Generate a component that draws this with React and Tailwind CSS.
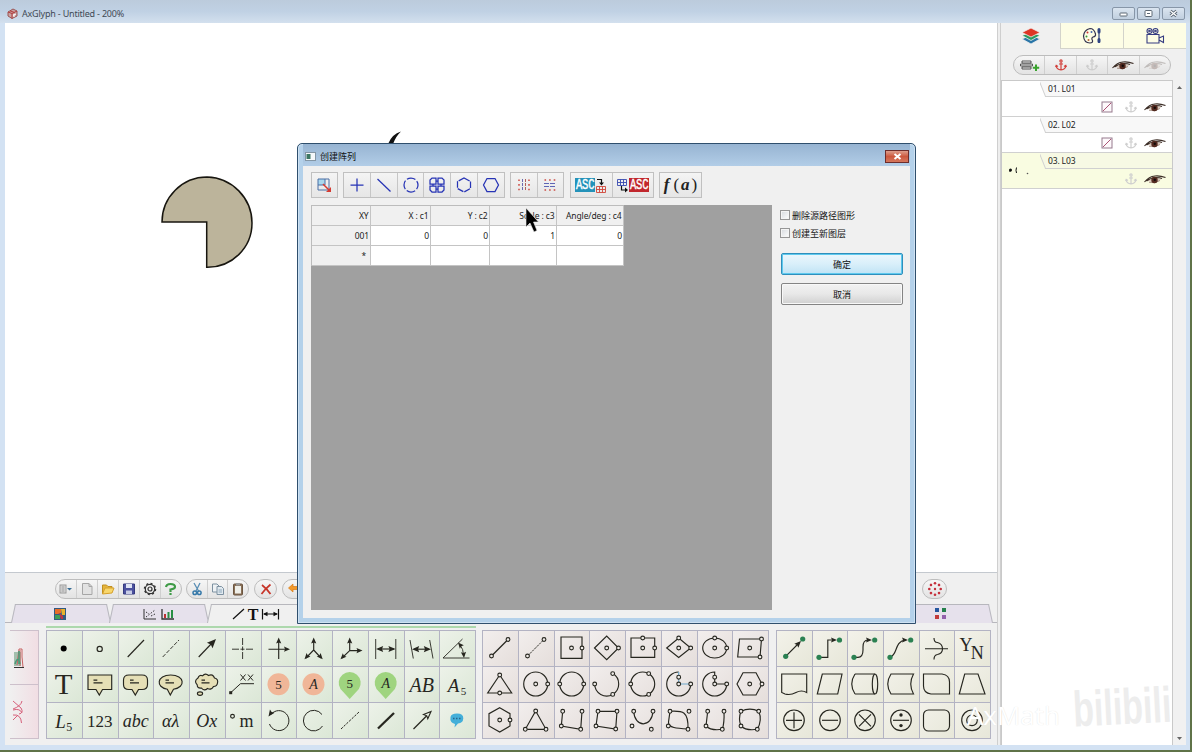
import React from 'react';

const INK = '#26261f';

// small round handle used by the shape icons
function H({ x, y, r = 1.9 }) {
    return <circle cx={x} cy={y} r={r} fill="#efebe8" stroke={INK} strokeWidth="1.1" />;
}

// filled arrow head, pointing right before it is rotated by a
function Head({ x, y, a = 0, s = 1 }) {
    return <path d="M0 0L-6 -2.6L-5 0L-6 2.6Z" fill={INK} stroke="none" transform={`translate(${x} ${y}) rotate(${a}) scale(${s})`} />;
}

function Txt({ x = 17.7, y, size, italic, children }) {
    return (
        <text
            x={x}
            y={y}
            fontSize={size}
            textAnchor="middle"
            fontStyle={italic ? 'italic' : 'normal'}
            fontFamily="'Liberation Serif', serif"
            fill={INK}
            stroke="none"
        >
            {children}
        </text>
    );
}

const PIN = 'M17.7 33L8.5 23A11 11 0 1 1 26.9 23Z';

const drawItems = [
    <circle cx="17.7" cy="18.6" r="3" fill="#000" stroke="none" />,
    <circle cx="17.7" cy="18.9" r="2.6" />,
    <path d="M9.7 27L26 10" />,
    <path d="M9.7 27L26 10" strokeWidth=".9" strokeDasharray="4 1.5" />,
    <g><path d="M9.7 27L24 12" /><Head x={27} y={9} a={-46} s={1.5} /></g>,
    <path d="M7 19.2H28M17.6 8V29" strokeWidth=".9" strokeDasharray="7 1.5 4 1.5" />,
    <g><path d="M7.5 19.2H27M17.7 29V10" /><Head x={29} y={19.2} /><Head x={17.7} y={7.5} a={-90} /></g>,
    <g><path d="M17.7 10V20L10 28M17.7 20L25 28" /><Head x={17.7} y={7.5} a={-90} /><Head x={8.5} y={29.3} a={132} /><Head x={26.7} y={29.3} a={48} /></g>,
    <g><path d="M17.7 10V20.6L10 28M17.7 20.6H28" /><Head x={17.7} y={7.5} a={-90} /><Head x={8.5} y={29.3} a={134} /><Head x={30.5} y={20.6} /></g>,
    <g><path d="M7.7 9V29M27.8 9V29" strokeWidth=".9" /><path d="M10 19H26" /><Head x={27.6} y={19} s={1.2} /><Head x={8} y={19} a={180} s={1.2} /></g>,
    <g><path d="M6 10L9.3 28.5M25.7 10L29 28.5" strokeWidth=".9" /><path d="M10 19.2H25" /><Head x={27} y={19.2} s={1.2} /><Head x={8} y={19.2} a={180} s={1.2} /></g>,
    <g><path d="M23.5 9L4 28H30.5M20.5 14Q24.5 19 24.8 26" strokeWidth=".9" /><Head x={19} y={12.4} a={-130} /><Head x={25} y={28} a={85} /></g>,

    <Txt y={28} size={29}>T</Txt>,
    <g><path d="M6 9H29.7V23.5H20.5L17.3 29L14 23.5H6Z" fill="#e5dfb6" /><path d="M11.5 14.2H15.3M11.5 16.8H20.5" strokeWidth="1.3" /></g>,
    <g><path d="M11 9H24Q29.5 9 29.5 14V18.5Q29.5 23.5 24 23.5H20.5L17.3 29L14 23.5H11Q5.5 23.5 5.5 18.5V14Q5.5 9 11 9Z" fill="#e5dfb6" /><path d="M12 14.2H15.6M12 16.8H21" strokeWidth="1.3" /></g>,
    <g><path d="M14.3 23.2C2.5 21.5 3.5 9 17.7 9S33 21.5 20.5 23.2L17.3 29Z" fill="#e5dfb6" /><path d="M12.5 14.2H16M12.5 16.8H21" strokeWidth="1.3" /></g>,
    <g>
        <path d="M9 12Q10 8.500 13.500 9.800Q16.500 6.500 19.500 9.500Q24 7.500 25.500 12Q29.500 13 28.500 17Q28 20.500 24.500 20.500Q22.500 24.500 18.500 22.500Q15 25.500 12.500 22Q8 22.500 8.200 18.800Q4.500 15 9 12Z" fill="#e5dfb6" />
        <path d="M12.5 14.2H16M12.5 16.8H20.5" strokeWidth="1.3" />
        <ellipse cx="11" cy="27.6" rx="2.6" ry="1.8" fill="#e5dfb6" />
    </g>,
    <g><path d="M5.7 26.700L15.500 17.700H29M15.500 8.500L20.500 14.500M20.500 8.500L15.500 14.500M23 8.500L28 14.500M28 8.500L23 14.500" strokeWidth="1" /><rect x="4.2" y="25.2" width="3" height="3" fill={INK} stroke="none" /></g>,
    <g><circle cx="17.5" cy="18.3" r="11" fill="#f0b698" stroke="none" /><Txt x={17.5} y={22.8} size={13}>5</Txt></g>,
    <g><circle cx="17.5" cy="18.3" r="11" fill="#f0b698" stroke="none" /><Txt x={17.5} y={22.8} size={14} italic>A</Txt></g>,
    <g><path d={PIN} fill="#9fd47f" stroke="none" /><Txt y={22.4} size={13}>5</Txt></g>,
    <g><path d={PIN} fill="#9fd47f" stroke="none" /><Txt y={22.4} size={14} italic>A</Txt></g>,
    <Txt y={25.5} size={20} italic>AB</Txt>,
    <g><Txt x={14.5} y={26} size={19} italic>A</Txt><Txt x={24.5} y={28.5} size={11}>5</Txt></g>,

    <g><Txt x={14.5} y={26} size={19} italic>L</Txt><Txt x={23.3} y={28.8} size={12}>5</Txt></g>,
    <Txt y={25} size={17}>123</Txt>,
    <Txt y={25} size={18} italic>abc</Txt>,
    <Txt y={25} size={18} italic>αλ</Txt>,
    <Txt y={25} size={18} italic>Ox</Txt>,
    <g><circle cx="7.5" cy="14.2" r="1.9" /><Txt x={21.5} y={25} size={18}>m</Txt></g>,
    <g><path d="M10 12.500A10 10 0 1 1 8.500 22" strokeWidth="1" /><Head x={7.5} y={14.5} a={125} s={1.1} /></g>,
    <path d="M26 12.500A10.300 10.300 0 1 0 26.500 24" strokeWidth="1" />,
    <path d="M9 27L27 10" strokeWidth="1" strokeDasharray="2.5 1.2" />,
    <path d="M10 26.500L26 11" strokeWidth="2.3" />,
    <g><path d="M9.5 27L23 13.500" /><path d="M27 9.500L23.800 16.800L22.800 13.800L19.500 12.500Z" fill="#e5eee0" strokeWidth="1.1" /></g>,
    <g>
        <path d="M11.500 15Q12 11.500 18 11.500Q24.500 11.500 24.300 16.500Q24 21 19 21.500L15.500 25.500L16 22Q10.500 20.500 11.500 15Z" fill="#43afd9" stroke="none" />
        <path d="M14 16.500H22" stroke="#27648a" strokeWidth="1.4" strokeDasharray="1.5 1.5" />
    </g>,
];

const shapeItems = [
    <g><path d="M9.5 26L26 9.500" /><H x={9.5} y={26} /><H x={26} y={9.5} /></g>,
    <g><path d="M9.5 26L26 9.500" strokeWidth=".9" strokeDasharray="2.5 .8" /><H x={9.5} y={26} /><H x={26} y={9.5} /></g>,
    <g><path d="M7 7H28V28.300H7Z" /><H x={17.5} y={18} /><H x={28} y={18} /></g>,
    <g><path d="M5.500 18L17.700 6L29.500 18L17.700 29.700Z" /><H x={17.7} y={18} /><H x={29.5} y={18} /></g>,
    <g><path d="M6 8H29.700V27.300H6Z" /><H x={17.7} y={8} /><H x={17.7} y={18} /><H x={29.7} y={18} /></g>,
    <g><path d="M5.700 18L17.700 8L29.700 18L17.700 27.500Z" /><H x={17.7} y={8} /><H x={17.7} y={18} /><H x={29.7} y={18} /></g>,
    <g><ellipse cx="17.7" cy="18" rx="12" ry="10" /><H x={17.7} y={8} /><H x={17.7} y={18} /><H x={29.7} y={18} /></g>,
    <g><path d="M7.500 9H29.500L28 27H5.700Z" /><H x={29.5} y={9} /><H x={28} y={27} /><H x={17.7} y={18} /></g>,

    <g><path d="M17.700 9L29.700 27H5.700Z" /><H x={17.7} y={9} /><H x={17.7} y={27} /></g>,
    <g><circle cx="17.7" cy="18" r="12" /><H x={17.7} y={18} /><H x={29.7} y={18} /></g>,
    <g><circle cx="17.7" cy="18" r="12" /><H x={5.7} y={18} /><H x={29.7} y={18} /></g>,
    <g><path d="M5.700 18A12 12 0 1 0 23.700 7.600" /><H x={5.7} y={18} /><H x={23.7} y={7.6} /><H x={23.7} y={28.4} /></g>,
    <g><circle cx="17.7" cy="18" r="12" /><H x={5.7} y={18} /><H x={23.7} y={7.6} /><H x={23.7} y={28.4} /></g>,
    <g><path d="M17.700 6A12 12 0 1 0 29.700 18" /><path d="M17.700 6V18H29.700" stroke="#6fa8cc" /><H x={17.7} y={11.2} /><H x={17.7} y={18} /><H x={29.7} y={18} /></g>,
    <g><path d="M17.700 18V6A12 12 0 1 0 29.700 18Z" /><H x={17.7} y={11.2} /><H x={17.7} y={18} /><H x={29.7} y={18} /></g>,
    <g><path d="M5 18L11 6.700H24L30 18L24 29H11Z" /><H x={17.7} y={18} /><H x={30} y={18} /></g>,

    <g><path d="M17.700 5.700L28 11.700V24L17.700 30L7 24V11.700Z" /><H x={17.7} y={18} /><H x={28} y={18} /></g>,
    <g><path d="M17.700 9L28 27.300H7.300Z" /><H x={17.7} y={9} /><H x={28} y={27.3} /><H x={7.3} y={27.3} /></g>,
    <g><path d="M8.700 9.300L7.300 24L26.700 27.300L28 9.300" /><H x={8.7} y={9.3} /><H x={7.3} y={24} /><H x={26.7} y={27.3} /><H x={28} y={9.3} /></g>,
    <g><path d="M9 9.300H28L26.700 27L7 24Z" /><H x={9} y={9.3} /><H x={28} y={9.3} /><H x={26.7} y={27} /><H x={7} y={24} /></g>,
    <g><path d="M8.700 9.300C9.500 26 27 26 28 9.300" /><H x={8.7} y={9.3} /><H x={28} y={9.3} /><H x={7} y={24} /><H x={26.3} y={27.3} /></g>,
    <g><path d="M9 9.300C22 8.500 27.500 9.500 27 27C16 26.500 7 26 7.500 20Z" /><H x={9} y={9.3} /><H x={28} y={9.3} /><H x={27} y={27.3} /><H x={7.3} y={24} /></g>,
    <g><path d="M10.700 9.300L9 24Q14 29 25.300 27.300Q27.500 21 27 9.300" /><H x={10.7} y={9.3} /><H x={9} y={24} /><H x={25.3} y={27.3} /><H x={27} y={9.3} /></g>,
    <g><path d="M9 9.300Q18 5 26.700 9.300Q30.500 18 25.300 27.300Q14 29 9 24Q6 17 9 9.300Z" /><H x={9} y={9.3} /><H x={26.7} y={9.3} /><H x={25.3} y={27.3} /><H x={9} y={24} /></g>,
];

function G({ x, y }) {
    return <circle cx={x} cy={y} r="2.6" fill="#2b8152" stroke="none" />;
}

const flowItems = [
    <g><path d="M9.700 26.300L23 13" /><G x={9.7} y={26.3} /><Head x={25} y={11} a={-45} s={1.1} /><G x={26.7} y={9} /></g>,
    <g><path d="M7 27.300H15.800V10H22" /><G x={7} y={27.3} /><Head x={25} y={10} /><G x={27.5} y={10} /></g>,
    <g><path d="M7 27.300H11Q16 27.300 16 20V17Q16 10 21 10" /><G x={7} y={27.3} /><Head x={25} y={10} /><G x={27.7} y={10} /></g>,
    <g><path d="M7 27.300C15 25 11 12 22 10" /><G x={7} y={27.3} /><Head x={25} y={10} /><G x={27.7} y={10} /></g>,
    <path d="M6 18.700H29M15 8Q15 12.500 18.500 12.500Q23.500 14 23.500 18.700Q23.500 23.500 18.500 24.500Q15 25 15 29.500" />,
    <g><Txt x={12} y={21} size={18}>Y</Txt><Txt x={23.3} y={28.8} size={18}>N</Txt></g>,

    <path d="M5.700 8H30.700V26.500Q25.500 23.500 20 26.500T9 28L5.700 26.500Z" />,
    <path d="M10.300 8H30L25.700 28H5.300Z" />,
    <g><path d="M8 8H28M8 28H28M8 8Q1.500 18 8 28" /><ellipse cx="28" cy="18" rx="2.7" ry="10" /></g>,
    <path d="M8 8H30.500Q25 18 30.500 28H8Q1.500 18 8 8Z" />,
    <path d="M4.500 8H23Q30.500 9 30.500 16V28H12Q4.500 27 4.500 20Z" />,
    <path d="M10.700 8H24L31 28H5.300Z" />,

    <g><circle cx="18" cy="18.3" r="10.3" /><path d="M10 18.300H26M18 10.300V26.300" /></g>,
    <g><circle cx="18" cy="18.3" r="10.3" /><path d="M10 18.300H26" /></g>,
    <g><circle cx="18" cy="18.3" r="10.3" /><path d="M12 12.300L24 24.300M24 12.300L12 24.300" /></g>,
    <g><circle cx="18" cy="18.3" r="10.3" /><path d="M10 18.300H26" /><circle cx="18" cy="13" r="1.7" fill={INK} stroke="none" /><circle cx="18" cy="23.6" r="1.7" fill={INK} stroke="none" /></g>,
    <rect x="4.5" y="8" width="26" height="21" rx="5" />,
    <g><circle cx="18" cy="18.3" r="10.3" /><circle cx="18" cy="18.3" r="5.3" /></g>,
];

function Palette({ items, className, cell }) {
    return (
        <div className={`grid h-[109px] shrink-0 grid-rows-3 border-l border-t border-[#b3b3c3] ${className}`}>
            {items.map((item, i) => (
                <div key={i} className={`overflow-hidden border-b border-r border-[#b3b3c3] bg-gradient-to-br ${cell}`}>
                    <svg width="36" height="36" viewBox="0 0 36 36" fill="none" stroke={INK} strokeWidth="1.15" className="-mt-px -ml-px block">
                        {item}
                    </svg>
                </div>
            ))}
        </div>
    );
}

function Pill({ children, className }) {
    return (
        <div className={`flex h-[20px] shrink-0 divide-x divide-[#cfcfcf] overflow-hidden rounded-full border border-[#bdbdbd] bg-gradient-to-b from-[#f6f6f6] to-[#e3e3e3] ${className}`}>
            {React.Children.map(children, (child) => (
                <div className="flex flex-1 items-center justify-center">{child}</div>
            ))}
        </div>
    );
}

function Icon({ size = 14, w, children, className = '' }) {
    return (
        <svg width={w || size} height={size} viewBox={`0 0 ${w || size} ${size}`} fill="none" stroke="#333" strokeWidth="1" className={`shrink-0 ${className}`}>
            {children}
        </svg>
    );
}

function Eye({ off }) {
    return (
        <Icon w={22} size={12} className={off ? 'opacity-25' : ''}>
            <path d="M3 7.500Q7 5 12 5Q15 5 17 6Q15 9.500 9.500 9.500Q6 9 3 7.500Z" stroke="none" fill="#d9c9bd" />
            <path d="M.5 9Q5 3.500 11 3Q16 2.500 21.500 4.500M2.500 8Q6 5 12 4.500Q16 4.500 18 5.500" stroke="#3a2c25" strokeWidth="1.1" />
            <path d="M5 9.300Q11 11 16 7.500" stroke="#9b8479" strokeWidth=".8" />
            <circle cx="10.5" cy="7" r="3.2" fill="#52291f" stroke="none" />
            <circle cx="10.8" cy="6.7" r="1.2" fill="#120a08" stroke="none" />
        </Icon>
    );
}

function Anchor({ color }) {
    return (
        <Icon w={12} size={12}>
            <g stroke={color} strokeWidth="1.2">
                <circle cx="6" cy="2" r="1.1" />
                <path d="M6 3.500V11M4 5H8M1 6.500Q1.500 10.500 6 11Q10.500 10.500 11 6.500M.5 8L1.200 6.300L3 7.500M9 7.500L10.800 6.300L11.500 8" />
            </g>
        </Icon>
    );
}

function TitleBar() {
    return (
        <header className="flex h-[23px] shrink-0 items-center bg-gradient-to-b from-[#bccbdc] via-[#c0d1e4] to-[#d3e0ee] pl-[7px] pt-[3px]">
            <Icon size={11}>
                <path d="M1 4L6 1L10 3V8L5 10.500L1 8Z" fill="#c9a5a5" stroke="#9a5555" />
                <path d="M1 4L5 5.500V10.500M5 5.500L10 3M3 2.800L7.500 4.500" stroke="#b33b3b" />
                <path d="M7 6V9M6 7.500L9 6" stroke="#fff" />
            </Icon>
            <span className="ml-[4px] text-[9px] leading-none tracking-[-0.2px] text-[#3f4a55]">AxGlyph - Untitled - 200%</span>
            <div className="mr-[5px] ml-auto flex gap-[2px]">
                {[
                    <rect x="4" y="5" width="7" height="3" rx=".5" fill="#fff" />,
                    <g><rect x="4" y="2.5" width="7" height="6" rx="1" fill="#fff" /><path d="M6 5.500H9" /></g>,
                    <g><path d="M4.500 3L10.500 8M10.500 3L4.500 8" strokeWidth="3" /><path d="M4.500 3L10.500 8M10.500 3L4.500 8" strokeWidth="1.2" stroke="#fff" /></g>,
                ].map((glyph, i) => (
                    <div key={i} className="flex h-[13px] w-[23px] items-center justify-center rounded-[2px] border border-[#8796a8] bg-gradient-to-b from-[#dbe5f0] to-[#c0cfdf]">
                        <Icon w={15} size={11}><g stroke="#5c6875">{glyph}</g></Icon>
                    </div>
                ))}
            </div>
        </header>
    );
}

function FileToolbar() {
    return (
        <div className="flex h-[32px] shrink-0 items-center border-t border-[#c4c9cf] pl-[50px]">
            <Pill className="w-[127px]">
                <Icon><rect x="1" y="3" width="6" height="8" fill="#ddd" stroke="#999" /><path d="M2.500 5H5.500M2.500 7H5.500M2.500 9H5.500" stroke="#999" /><path d="M8 6H13L10.500 8.500Z" fill="#376c93" stroke="none" /></Icon>
                <Icon><path d="M2.500 1.500H9L12 4.500V12.500H2.500Z" fill="#e2e2e2" stroke="#a6a6a6" /><path d="M9 1.500V4.500H12" stroke="#a6a6a6" /></Icon>
                <Icon><path d="M1.500 12V3H5.500L7 4.500H11V6" fill="#e5b53c" stroke="#c08f21" /><path d="M1.500 12L4 6H13L11 11Z" fill="#f8d76c" stroke="#d5a02c" /></Icon>
                <Icon><path d="M1.500 2H12.500V12H1.500Z" fill="#4c519f" stroke="#353a80" /><path d="M4 2H10V6H4Z" fill="#dfe4f4" stroke="none" /><path d="M4 8.500H10V12H4Z" fill="#c7cce6" stroke="none" /></Icon>
                <Icon><circle cx="7" cy="7" r="4.7" strokeWidth="1.2" /><circle cx="7" cy="7" r="5.5" strokeWidth="1.5" strokeDasharray="2 2.3" /><circle cx="7" cy="7" r="2" strokeWidth="1.2" /></Icon>
                <Icon><path d="M2 5Q2.500 2 6.500 2Q11 2 11 4.800Q11 7 6.500 7.500V10M6.500 11V13" stroke="#3f9b47" strokeWidth="2.2" /></Icon>
            </Pill>
            <Pill className="ml-[4px] w-[63px]">
                <Icon><path d="M4 1L8.500 9M10 1L6 9" stroke="#5b8fb5" strokeWidth="1.3" /><circle cx="4.8" cy="10.8" r="1.8" stroke="#3679a9" strokeWidth="1.5" /><circle cx="9.3" cy="10.8" r="1.8" stroke="#3679a9" strokeWidth="1.5" /></Icon>
                <Icon><path d="M1.500 2H6L8 4V10H1.500Z" fill="#eef2f5" stroke="#7d91a1" /><path d="M6 4.500H10.500L12.500 6.500V12.500H6Z" fill="#e1e9ef" stroke="#7d91a1" /><path d="M7.500 8H11M7.500 10H11" stroke="#8ba7bb" /></Icon>
                <Icon><rect x="2.5" y="2" width="9" height="11" rx="1" fill="#8a7158" stroke="#6b5540" /><rect x="4" y="4" width="6" height="7.5" fill="#efefe9" stroke="none" /><rect x="5" y="1" width="4" height="2.5" fill="#999" stroke="none" /></Icon>
            </Pill>
            <Pill className="ml-[5px] w-[23px]">
                <Icon><path d="M3 3Q8 7 11.500 12M11.500 2.500Q6 7 2.500 12" stroke="#c73529" strokeWidth="1.7" /></Icon>
            </Pill>
            <Pill className="ml-[5px] w-[46px]">
                <Icon><path d="M6 2L1.500 6L6 10V7.500H13V4.500H6Z" fill="#f39a2b" stroke="#d97b15" strokeWidth=".7" /></Icon>
                <Icon><path d="M8 2L12.500 6L8 10V7.500H1V4.500H8Z" fill="#f39a2b" stroke="none" /></Icon>
            </Pill>
            <Pill className="mr-[50px] ml-auto w-[25px]">
                <Icon size={16}>
                    <g fill="#c5303c" stroke="none">
                        {[0, 45, 90, 135, 180, 225, 270, 315].map((a) => (
                            <circle key={a} cx="8" cy="2.3" r="1.3" transform={`rotate(${a} 8 8)`} />
                        ))}
                        <circle cx="8" cy="8" r="1.2" />
                    </g>
                </Icon>
            </Pill>
        </div>
    );
}

function Tab({ active, children }) {
    const fill = active ? 'bg-[#f0f0f0]' : 'bg-[#e6e1ec]';

    return (
        <div className="relative flex h-[19px] w-[98px] items-center justify-center">
            <div className={`absolute inset-y-0 right-[40px] left-[2px] -skew-x-12 border-t border-l border-[#b7b7bd] ${fill}`} />
            <div className={`absolute inset-y-0 right-0 left-[40px] skew-x-12 border-t border-r border-[#b7b7bd] ${fill}`} />
            <div className="relative flex items-center gap-[4px]">{children}</div>
        </div>
    );
}

function CategoryTabs() {
    return (
        <div className="flex h-[19px] shrink-0 border-b border-[#b7b7bd] pl-[6px]">
            <Tab>
                <Icon size={12}>
                    <rect width="12" height="12" fill="#315a80" stroke="none" />
                    <path d="M1 1H7V5L4 6H1Z" fill="#e76c28" stroke="none" /><path d="M7 1H11V7H8Z" fill="#e8b22c" stroke="none" /><path d="M1 7H6V11H1Z" fill="#3e9d56" stroke="none" /><path d="M5 5L9 8V11H7Z" fill="#bd3542" stroke="none" />
                </Icon>
            </Tab>
            <Tab>
                <Icon w={14} size={12}><path d="M1 1V11H13" /><path d="M3 9L12 2M3 4L6 6M8 8L12 6" strokeDasharray="1.5 1.5" /></Icon>
                <Icon w={13} size={12}><path d="M1 1V11H13" strokeWidth="1.3" /><path d="M4 6V10" stroke="#b33" strokeWidth="2" /><path d="M7.500 4V10" stroke="#278f43" strokeWidth="2" /><path d="M11 2V10" stroke="#278f43" strokeWidth="2" /></Icon>
            </Tab>
            <Tab active>
                <Icon w={48} size={14}>
                    <path d="M1 12L12 2M30.500 2V12.500M46.500 2V12.500M32 7H45" stroke="#111" strokeWidth="1.2" />
                    <path d="M31 7L35.500 4.800V9.200ZM46 7L41.500 4.800V9.200Z" fill="#111" stroke="none" />
                    <text x="21" y="12.5" fontSize="16" fontWeight="bold" textAnchor="middle" fontFamily="'Liberation Serif', serif" fill="#111" stroke="none">T</text>
                </Icon>
            </Tab>
            {[1, 2, 3, 4, 5, 6].map((n) => (
                <Tab key={n} />
            ))}
            <Tab>
                <div className="pr-[4px]">
                    <Icon size={13}>
                        <g stroke="none"><rect x="1" y="1" width="4" height="4" fill="#24569e" /><rect x="8" y="1" width="4" height="4" fill="#24804b" /><rect x="1" y="8" width="4" height="4" fill="#c23b3b" /><rect x="8" y="8" width="4" height="4" fill="#9361ab" /></g>
                    </Icon>
                </div>
            </Tab>
        </div>
    );
}

function Palettes() {
    return (
        <div className="flex flex-1 pt-[2px] pl-[5px]">
            <div className="mt-[5px] flex h-[109px] w-[29px] shrink-0 flex-col bg-gradient-to-r from-[#f0f0f0] to-[#f1dde3]">
                <div className="flex flex-1 items-center border-y border-r border-[#cdc0cb] pl-[3px]">
                    <Icon w={12} size={22}><path d="M1 5H8V19H1Z" fill="#a3bfad" stroke="none" /><path d="M4 18L6 2H9V10L10 20M7 3V19" stroke="#c66060" /><path d="M1 20.500H11" stroke="#333" /><path d="M2 17Q5 8 7 17M6 4V17" stroke="#4b9a78" strokeWidth="1.6" /></Icon>
                </div>
                <div className="flex flex-1 items-center border-r border-b border-[#cdc0cb] pl-[3px]">
                    <Icon w={11} size={24}><path d="M0 1L8 8Q11 13 6 14M9 1Q8 6 0 9M0 10Q7 8 9 13M0 15Q8 14 8.500 23M0 20L5 15" stroke="#d6607a" /></Icon>
                </div>
            </div>
            <div className="mt-px ml-[7px]">
                <div className="mb-[2px] h-[2px] bg-[#add8ad]" />
                <Palette items={drawItems} className="w-[430px] grid-cols-12" cell="from-[#edf2e9] to-[#dbe7d6]" />
            </div>
            <Palette items={shapeItems} className="mt-[5px] ml-[6px] w-[287px] grid-cols-8" cell="from-[#f2eeed] to-[#e5dedb]" />
            <Palette items={flowItems} className="mt-[5px] ml-[7px] w-[215px] grid-cols-6" cell="from-[#f3f2ea] to-[#e7e7d9]" />
        </div>
    );
}

function Layer({ name, selected, hatched, preview }) {
    return (
        <div className={`flex h-[36px] border-b border-[#d0d0d0] ${selected ? 'bg-[#f9fce1]' : 'bg-white'}`}>
            <div className="w-[38px] pt-[14px] pl-[5px]">
                {preview && (
                    <Icon w={24} size={10}>
                        <circle cx="3.5" cy="3" r="1.5" fill="#111" stroke="none" />
                        <path d="M3 3V5M9.500 .5Q8.500 3.500 9.500 6" stroke="#111" />
                        <circle cx="20.5" cy="6.5" r=".8" fill="#555" stroke="none" />
                    </Icon>
                )}
            </div>
            <div className="flex flex-1 flex-col overflow-hidden">
                <div className="relative h-[16px] shrink-0 pl-[8px] text-[8.5px] leading-[15px] tracking-[-0.15px] text-[#222]">
                    <div className={`absolute inset-y-0 -right-3 left-[2px] skew-x-[22deg] border-b border-l border-[#d0d0d0] ${selected ? 'bg-[#f7f9e4]' : 'bg-[#f8f8f8]'}`} />
                    <span className="relative">{name}</span>
                </div>
                <div className="flex flex-1 items-center justify-end pr-[6px]">
                    {hatched && (
                        <Icon size={12}><rect x="1" y="1" width="10" height="10" fill="#fdf8fb" stroke="#967a8d" /><path d="M2 10L10 2" stroke="#aa5374" /></Icon>
                    )}
                    <div className="mr-[7px] ml-[12px] flex"><Anchor color="#cfcfcf" /></div>
                    <Eye />
                </div>
            </div>
        </div>
    );
}

function SidePanel() {
    return (
        <aside className="flex w-[185px] shrink-0 flex-col bg-[#f0f0f0]">
            <div className="flex h-[26px] shrink-0">
                <div className="flex w-[59px] items-center justify-center">
                    <Icon w={20} size={18}>
                        <path d="M1 12L10 17L19 12L10 8Z" fill="#2b76a8" stroke="#f0f0f0" strokeWidth=".8" />
                        <path d="M1 8.500L10 13.500L19 8.500L10 5Z" fill="#2c9b60" stroke="#f0f0f0" strokeWidth=".8" />
                        <path d="M1 5.500L10 1L19 5.500L10 10Z" fill="#dd3625" stroke="#f0f0f0" strokeWidth=".8" />
                    </Icon>
                </div>
                <div className="flex w-[63px] items-center justify-center border-b border-l border-[#d3d3cb] bg-[#fdfde5]">
                    <Icon w={20} size={18}>
                        <path d="M8 1.500Q2 3 1.500 9Q2 16 8 16Q11 16 10.500 13.500Q9 11 11 10Q14 9.500 13.500 7Q12 1.500 8 1.500Z" stroke="#33334f" strokeWidth="1.2" />
                        <circle cx="5.5" cy="5.5" r="1" fill="#c33" stroke="none" /><circle cx="9.5" cy="5" r="1" fill="#46a" stroke="none" /><circle cx="4.5" cy="9.5" r="1" fill="#393" stroke="none" /><circle cx="6.5" cy="13" r="1" fill="#b63" stroke="none" />
                        <path d="M17 2V16" stroke="#2e4381" strokeWidth="1.2" /><path d="M17 2.500V5M17 12.500V14.500" stroke="#2e4381" strokeWidth="3" strokeLinecap="round" />
                    </Icon>
                </div>
                <div className="flex flex-1 items-center justify-center border-b border-l border-[#d3d3cb] bg-[#fdfde5]">
                    <Icon w={20} size={18}>
                        <g stroke="#363c82" strokeWidth="1.1"><circle cx="4.5" cy="4" r="2.5" /><circle cx="10.5" cy="4" r="2.5" /><circle cx="4.5" cy="4" r=".8" /><circle cx="10.5" cy="4" r=".8" /><path d="M2 7.500H14V16H2ZM14 11L18.500 9V15.500L14 13" /></g>
                    </Icon>
                </div>
            </div>
            <Pill className="mt-[6px] ml-[12px] w-[158px]">
                <Icon w={22} size={14}><path d="M4 3H13V5H4ZM4 9H13V11H4ZM2.500 6H14.500V8H2.500Z" stroke="#444" strokeWidth=".9" /><path d="M18 6.500V13M14.800 9.800H21.200" stroke="#3aa32e" strokeWidth="2" /></Icon>
                <Anchor color="#d2413c" />
                <Anchor color="#cdcdcd" />
                <Eye />
                <Eye off />
            </Pill>
            <div className="mt-[5px] flex flex-1">
                <div className="w-[172px] border-t border-r border-l border-[#c9c9c9] bg-white">
                    <Layer name="01. L01" hatched />
                    <Layer name="02. L02" hatched />
                    <Layer name="03. L03" selected preview />
                </div>
                <div className="flex flex-1 flex-col items-center justify-between bg-[#f1f1f1] pt-[5px] pb-[4px]">
                    <Icon size={5}><path d="M0 4L2.500 1L5 4Z" fill="#666" stroke="none" /></Icon>
                    <Icon size={5}><path d="M0 1L2.500 4L5 1Z" fill="#666" stroke="none" /></Icon>
                </div>
            </div>
        </aside>
    );
}

function ToolGroup({ items, className = '' }) {
    return (
        <div className={`flex h-[26px] shrink-0 divide-x divide-[#c6c6c6] border border-[#c0c0c0] bg-gradient-to-b from-[#f4f4f4] to-[#e6e6e6] ${className}`}>
            {items.map((item, i) => (
                <div key={i} className="flex w-0 flex-1 items-center justify-center">{item}</div>
            ))}
        </div>
    );
}

function Asc({ color, children }) {
    return (
        <span className={`flex h-[14px] w-[20px] shrink-0 items-center justify-center text-[14px] leading-none text-white ${color}`}>
            <span className="scale-x-[0.75] font-['Liberation_Mono',monospace] tracking-[-0.3px] [-webkit-text-stroke:0.4px_white]">{children}</span>
        </span>
    );
}

const BLUE = '#2633b5';

function MiniGrid({ color }) {
    return <path d="M.5 .5H9.500V6.500H.5ZM.5 3.500H9.500M3.500 .5V6.500M6.500 .5V6.500" stroke={color} strokeWidth=".9" />;
}

function DialogTools() {
    const shapes = [
        <path d="M9 2.500V15.500M2.500 9H15.500" />,
        <path d="M2.500 3L15.500 15.500" />,
        <circle cx="9" cy="9" r="7" strokeDasharray="9 2" strokeDashoffset="4.5" />,
        <path d="M4 2H8V8H2V4ZM10 2H14L16 4V8H10ZM2 10H8V16H4L2 14ZM10 10H16V14L14 16H10ZM8 5H10M8 13H10M5 8V10M13 8V10" />,
        <path d="M9 2L15.500 5.500V12.500L9 16L2.500 12.500V5.500Z" strokeDasharray="6.4 1.1" />,
        <path d="M1.500 9L5 2.500H13L16.500 9L13 15.500H5Z" />,
    ];

    return (
        <div className="flex h-[26px]">
            <ToolGroup
                className="w-[27px]"
                items={[
                    <Icon key="resize" size={15}>
                        <rect x="1" y="1" width="7" height="6" fill="#a9d8ee" stroke="none" />
                        <path d="M1 1H12V12H1ZM1 7H8V1" stroke="#4b6fa5" />
                        <path d="M6 6L12 12" stroke="#d53a31" strokeWidth="1.5" /><path d="M14 14V9L9 14Z" fill="#d53a31" stroke="none" />
                    </Icon>,
                ]}
            />
            <ToolGroup
                className="ml-[5px] w-[162px]"
                items={shapes.map((shape, i) => (
                    <Icon key={i} size={18}><g stroke={BLUE} strokeWidth="1.25">{shape}</g></Icon>
                ))}
            />
            <ToolGroup
                className="ml-[5px] w-[54px]"
                items={[
                    <Icon key="cols" size={14}><path d="M2 1.500V14M12 1.500V14" stroke="#cc4a42" strokeWidth="1.5" strokeDasharray="1.6 3" /><path d="M5.500 1V13" stroke="#6b6bb1" strokeDasharray="3 1" /><path d="M8.500 1V13" stroke="#b0635f" strokeDasharray="3 1" /></Icon>,
                    <Icon key="rows" size={14}><path d="M1.500 2H14M1.500 12H14" stroke="#cc4a42" strokeWidth="1.5" strokeDasharray="1.6 3" /><path d="M1 5.500H13M1 8.500H13" stroke="#5f66b5" strokeDasharray="5 1" /></Icon>,
                ]}
            />
            <ToolGroup
                className="ml-[6px] w-[84px]"
                items={[
                    <div key="in" className="flex items-center">
                        <Asc color="bg-[#2492b9]">ASC</Asc>
                        <Icon w={12} size={15}><path d="M2 1.500H6.500V6" stroke="#111" strokeWidth="1.2" /><path d="M4 4.500H9L6.500 7.500Z" fill="#111" stroke="none" /><g transform="translate(1 8)"><MiniGrid color="#d04538" /></g></Icon>
                    </div>,
                    <div key="out" className="flex items-center">
                        <Icon w={12} size={15}><g transform="translate(0 1)"><MiniGrid color="#3849b0" /></g><path d="M4.500 8V12H8" stroke="#111" strokeWidth="1.2" /><path d="M8 9.500V14.500L11 12Z" fill="#111" stroke="none" /></Icon>
                        <Asc color="bg-[#c1272d]">ASC</Asc>
                    </div>,
                ]}
            />
            <ToolGroup
                className="ml-[5px] w-[43px]"
                items={[
                    <span key="fn" className="flex items-center gap-[2px] pb-px font-['Liberation_Serif',serif] text-[17px] leading-none text-[#222]">
                        <b className="mr-[2px] italic">f</b>(<b className="italic">a</b>)
                    </span>,
                ]}
            />
        </div>
    );
}

const columns = ['XY', 'X : c1', 'Y : c2', 'Scale : c3', 'Angle/deg : c4'];
const rows = [
    ['001', '0', '0', '1', '0'],
    ['*', '', '', '', ''],
];

function ArrayTable() {
    return (
        <div className="h-[405px] w-[461px] bg-[#a0a0a0]">
            <div className="grid w-[313px] grid-cols-[59px_60px_59px_67px_67px] grid-rows-[20px_20px_20px] border-t border-l border-[#bcbcbc] text-right text-[8.5px] leading-[20px] tracking-[-0.1px] text-[#222]">
                {columns.map((label) => (
                    <div key={label} className="border-r border-b border-[#c4c4c4] bg-[#f0f0f0] pr-[1.5px] whitespace-nowrap">{label}</div>
                ))}
                {rows.map((row) => row.map((value, i) => (
                    <div key={row[0] + i} className={`border-r border-b border-[#c4c4c4] pr-[1px] ${i === 0 ? 'bg-[#f0f0f0]' : 'bg-white'}`}>
                        {value === '*' ? <span className="mr-[3px]">*</span> : value}
                    </div>
                )))}
            </div>
        </div>
    );
}

function CheckLine({ label }) {
    return (
        <label className="flex h-[18px] items-center gap-[2px] text-[9px] leading-none whitespace-nowrap text-[#111]">
            <span className="h-[10px] w-[10px] border border-[#969696] bg-gradient-to-br from-[#d5d9dd] to-white shadow-[inset_0_0_0_1px_#f4f4f4]" />
            {label}
        </label>
    );
}

function ArrayDialog() {
    return (
        <div className="absolute top-[143px] left-[297px] flex h-[481px] w-[619px] flex-col rounded-t-[5px] border border-[#2f4f6d] bg-[#b4d1ea] px-[5px] pb-[5px] shadow-[inset_0_0_0_1px_#cfe2f3]">
            <div className="flex h-[22px] shrink-0 items-center bg-gradient-to-b from-[#97b4d2] to-[#b2cde7] pt-[3px] pl-[2px]">
                <Icon w={11} size={9}><rect x=".5" y=".5" width="10" height="8" fill="#f5f8fa" stroke="#8496a5" /><rect x="1.5" y="2" width="4" height="5" fill="#3d7763" stroke="none" /></Icon>
                <span className="ml-[4px] text-[9px] leading-none text-[#111]">创建阵列</span>
                <div className="mr-px ml-auto flex h-[13px] w-[24px] items-center justify-center border border-[#6d2d2b] bg-gradient-to-b from-[#dd9d8b] via-[#cc583e] to-[#d5765c]">
                    <Icon w={9} size={7}><path d="M1.500 1L7.500 6M7.500 1L1.500 6" stroke="#fff" strokeWidth="2" /></Icon>
                </div>
            </div>
            <div className="flex-1 bg-[#f0f0f0] pt-[6px] pl-[8px]">
                <DialogTools />
                <div className="mt-[7px] flex">
                    <ArrayTable />
                    <div className="mt-px ml-[8px] w-[123px]">
                        <CheckLine label="删除源路径图形" />
                        <CheckLine label="创建至新图层" />
                        <button type="button" className="mt-[11px] ml-px block h-[22px] w-[122px] rounded-[2px] border border-[#2f8fbc] bg-gradient-to-b from-[#ebf6fc] via-[#d9effa] to-[#bfe3f5] text-[9px] leading-none text-[#111] shadow-[inset_0_0_0_1px_#5ec9ee]">确定</button>
                        <button type="button" className="mt-[8px] ml-px block h-[22px] w-[122px] rounded-[2px] border border-[#848484] bg-gradient-to-b from-[#f2f2f2] via-[#e8e8e8] to-[#d0d0d0] text-[9px] leading-none text-[#111] shadow-[inset_0_0_0_1px_#f8f8f8]">取消</button>
                    </div>
                </div>
            </div>
        </div>
    );
}

export default function App() {
    return (
        <div className="relative flex h-[752px] w-[1192px] flex-col overflow-hidden border-r-2 border-b-2 border-[#5f7348] bg-[#d3e2f3] font-['Noto_Sans','Noto_Sans_CJK_SC',sans-serif]">
            <TitleBar />
            <div className="mr-[4px] mb-[5px] ml-[5px] flex flex-1">
                <main className="flex w-[992px] shrink-0 flex-col bg-[#f0f0f0]">
                    <div className="h-[549px] shrink-0 bg-white">
                        <svg width="992" height="549" viewBox="5 23 992 549">
                            <path d="M206.700 222V267.300A45 45 0 1 0 162 222Z" fill="#bcb49b" stroke="#17150f" strokeWidth="1.5" />
                            <path d="M388 144Q392 134 401 131.500Q396 136 393 144Z" fill="#111" />
                        </svg>
                    </div>
                    <FileToolbar />
                    <CategoryTabs />
                    <Palettes />
                </main>
                <div className="w-[4px] shrink-0 border-x border-[#cfcfcf] bg-[#eeeeee]" />
                <SidePanel />
            </div>

            <ArrayDialog />

            <svg className="absolute top-[207px] left-[525px]" width="14" height="27" viewBox="0 0 14 27">
                <path d="M1 1V20L5 16L9 25L12 23.500L8.500 15H13.500Z" fill="#000" stroke="#eee" strokeWidth=".6" />
            </svg>

            <div className="pointer-events-none absolute right-[21px] bottom-[18px] flex items-end gap-[15px] leading-none whitespace-nowrap">
                <span className="pb-[4px] font-['Open_Sans',sans-serif] text-[26px] leading-[26px] text-white [text-shadow:0_0_1px_#dedede]">AxMath</span>
                <span className="flex w-[94px] justify-center font-['Liberation_Sans',sans-serif] text-[50px] leading-[50px] font-bold text-[#ededed]">
                    <span className="-rotate-3 scale-x-[0.68]">bilibili</span>
                </span>
            </div>
        </div>
    );
}
